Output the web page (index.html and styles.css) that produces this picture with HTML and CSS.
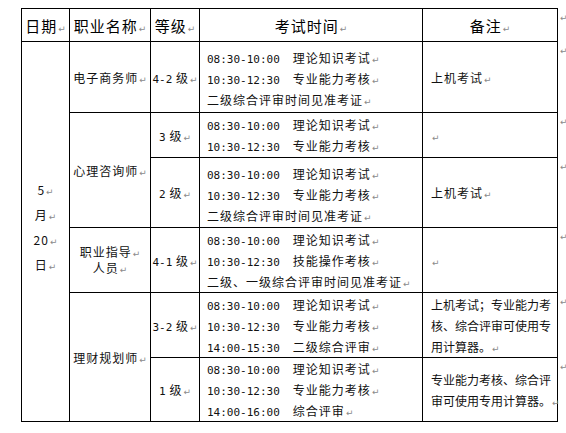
FILE: index.html
```html
<!DOCTYPE html>
<html lang="zh">
<head>
<meta charset="utf-8">
<title>考试时间安排</title>
<link rel="stylesheet" href="styles.css">
</head>
<body>
<table class="schedule">
  <colgroup>
    <col class="c-date"><col class="c-job"><col class="c-level"><col class="c-time"><col class="c-note"><col class="c-end">
  </colgroup>
  <tr class="r-head">
    <th>日期<span class="m">↵</span></th>
    <th>职业名称<span class="m">↵</span></th>
    <th>等级<span class="m">↵</span></th>
    <th>考试时间<span class="m">↵</span></th>
    <th>备注<span class="m">↵</span></th>
    <td class="end"><span class="m">↵</span></td>
  </tr>
  <tr class="r1">
    <td class="date" rowspan="6">
      <div>5<span class="m">↵</span></div>
      <div>月<span class="m">↵</span></div>
      <div>20<span class="m">↵</span></div>
      <div>日<span class="m">↵</span></div>
    </td>
    <td class="job">电子商务师<span class="m">↵</span></td>
    <td class="level"><span class="t">4-2</span> 级<span class="m">↵</span></td>
    <td class="time time-low">
      <div><span class="t">08:30-10:00</span><span class="task">理论知识考试</span><span class="m">↵</span></div>
      <div><span class="t">10:30-12:30</span><span class="task">专业能力考核</span><span class="m">↵</span></div>
      <div>二级综合评审时间见准考证<span class="m">↵</span></div>
    </td>
    <td class="note">上机考试<span class="m">↵</span></td>
    <td class="end"><span class="m">↵</span></td>
  </tr>
  <tr class="r2">
    <td class="job" rowspan="2">心理咨询师<span class="m">↵</span></td>
    <td class="level"><span class="t">3</span> 级<span class="m">↵</span></td>
    <td class="time">
      <div><span class="t">08:30-10:00</span><span class="task">理论知识考试</span><span class="m">↵</span></div>
      <div><span class="t">10:30-12:30</span><span class="task">专业能力考核</span><span class="m">↵</span></div>
    </td>
    <td class="note"><span class="m">↵</span></td>
    <td class="end"><span class="m">↵</span></td>
  </tr>
  <tr class="r3">
    <td class="level"><span class="t">2</span> 级<span class="m">↵</span></td>
    <td class="time time-low">
      <div><span class="t">08:30-10:00</span><span class="task">理论知识考试</span><span class="m">↵</span></div>
      <div><span class="t">10:30-12:30</span><span class="task">专业能力考核</span><span class="m">↵</span></div>
      <div>二级综合评审时间见准考证<span class="m">↵</span></div>
    </td>
    <td class="note">上机考试<span class="m">↵</span></td>
    <td class="end"><span class="m">↵</span></td>
  </tr>
  <tr class="r4">
    <td class="job job-tight">职业指导<span class="m">↵</span><br>人员<span class="m">↵</span></td>
    <td class="level"><span class="t">4-1</span> 级<span class="m">↵</span></td>
    <td class="time">
      <div><span class="t">08:30-10:00</span><span class="task">理论知识考试</span><span class="m">↵</span></div>
      <div><span class="t">10:30-12:30</span><span class="task">技能操作考核</span><span class="m">↵</span></div>
      <div>二级、一级综合评审时间见准考证<span class="m">↵</span></div>
    </td>
    <td class="note"><span class="m">↵</span></td>
    <td class="end"><span class="m">↵</span></td>
  </tr>
  <tr class="r5">
    <td class="job" rowspan="2">理财规划师<span class="m">↵</span></td>
    <td class="level"><span class="t">3-2</span> 级<span class="m">↵</span></td>
    <td class="time">
      <div><span class="t">08:30-10:00</span><span class="task">理论知识考试</span><span class="m">↵</span></div>
      <div><span class="t">10:30-12:30</span><span class="task">专业能力考核</span><span class="m">↵</span></div>
      <div><span class="t">14:00-15:30</span><span class="task">二级综合评审</span><span class="m">↵</span></div>
    </td>
    <td class="note note-wrap">上机考试；专业能力考<br>核、综合评审可使用专<br>用计算器。<span class="m">↵</span></td>
    <td class="end"><span class="m">↵</span></td>
  </tr>
  <tr class="r6">
    <td class="level"><span class="t">1</span> 级<span class="m">↵</span></td>
    <td class="time">
      <div><span class="t">08:30-10:00</span><span class="task">理论知识考试</span><span class="m">↵</span></div>
      <div><span class="t">10:30-12:30</span><span class="task">专业能力考核</span><span class="m">↵</span></div>
      <div><span class="t">14:00-16:00</span><span class="task">综合评审</span><span class="m">↵</span></div>
    </td>
    <td class="note note-wrap">专业能力考核、综合评<br>审可使用专用计算器。<span class="m">↵</span></td>
    <td class="end"><span class="m">↵</span></td>
  </tr>
</table>
</body>
</html>
```

FILE: styles.css
```css
html, body {
  margin: 0;
  padding: 0;
  background: #ffffff;
}

body {
  font-family: "Noto Sans CJK SC", "DejaVu Sans", sans-serif;
  color: #111111;
}

.schedule {
  border-collapse: collapse;
  table-layout: fixed;
  width: 545px;
  margin: 8px 0 0 21px;
}

.c-date { width: 48px; }
.c-job { width: 81px; }
.c-level { width: 49px; }
.c-time { width: 223px; }
.c-note { width: 135px; }
.c-end { width: 9px; }

.schedule th,
.schedule td {
  border: 1px solid #000000;
  padding: 0;
  font-size: 12px;
  line-height: 21px;
  letter-spacing: 1px;
  text-align: center;
  vertical-align: middle;
  font-weight: normal;
  white-space: nowrap;
}

.schedule th {
  font-size: 15px;
  letter-spacing: 1px;
  color: #000000;
  line-height: 20px;
  padding-top: 2px;
}

.r-head { height: 33px; }
.r1 { height: 71px; }
.r2 { height: 45px; }
.r3 { height: 70px; }
.r4 { height: 65px; }
.r5 { height: 65px; }
.r6 { height: 64px; }

.schedule td.end {
  border: none;
  vertical-align: top;
  text-align: left;
  padding: 1px 0 0 1px;
  line-height: 12px;
}

.schedule td.date {
  line-height: 25px;
  padding-bottom: 10px;
}

.schedule td.date div {
  height: 25px;
  line-height: 25px;
}

.schedule td.job-tight {
  line-height: 16px;
}

.schedule td.time {
  text-align: left;
  padding-left: 7px;
}

.schedule td.time-low {
  padding-top: 3px;
}

.schedule td.time div {
  height: 21px;
  line-height: 21px;
}

.t {
  font-family: "DejaVu Sans Mono", "Liberation Mono", monospace;
  font-size: 11px;
  letter-spacing: 0;
  line-height: 1;
}

.task {
  margin-left: 13px;
  line-height: 1;
}

.schedule td.note {
  text-align: left;
  padding-left: 8px;
}

.schedule td.note-wrap {
  letter-spacing: 0;
}

.m {
  font-family: "DejaVu Sans", sans-serif;
  font-size: 9px;
  color: #8a8a8a;
  letter-spacing: 0;
  margin-left: 1px;
  line-height: 1;
}
```
